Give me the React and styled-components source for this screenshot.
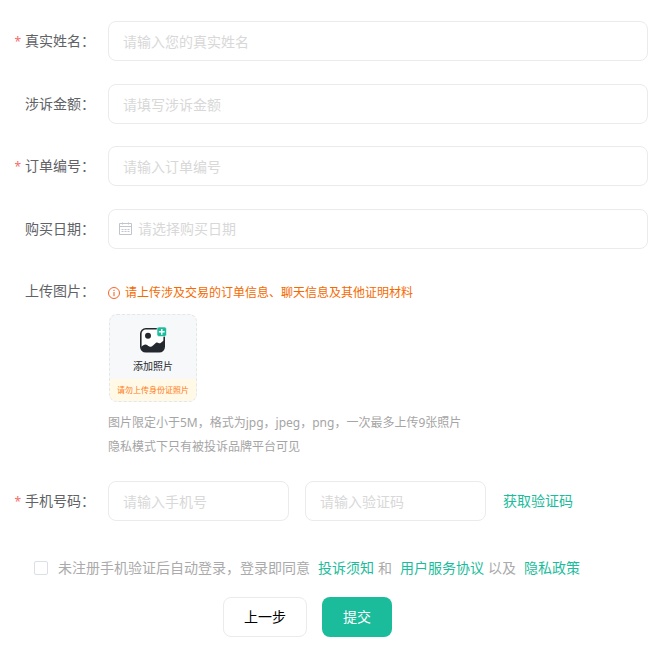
import React, { useState } from 'react';
import styled, { createGlobalStyle, css } from 'styled-components';

/* ================= ICONS ================= */

const CalendarIcon = () => (
  <svg width="14" height="14" viewBox="0 0 14 14" fill="none" stroke="#c0c4cc" aria-hidden="true">
    <path d="M0.5 1.5h12v11h-12zM0.5 4.5h12M3.5 0.5v2M9.5 0.5v2" />
    <path d="M2.5 7.5h2M5.5 7.5h2M8.5 7.5h2M2.5 9.5h2M5.5 9.5h2M8.5 9.5h2" />
  </svg>
);

const InfoIcon = () => (
  <svg width="12" height="12" viewBox="0 0 12 12" fill="none" stroke="#f5540a" aria-hidden="true">
    <circle cx="6" cy="6" r="5.5" strokeWidth="0.9" />
    <path d="M6 5v4.2M6 2.8v1.2" />
  </svg>
);

const PhotoIcon = () => (
  <svg width="28" height="28" viewBox="0 0 28 28" aria-hidden="true">
    <rect x="1.8" y="2.8" width="23.400" height="23" rx="5" fill="#fff" stroke="#24292f" strokeWidth="1.6" />
    <circle cx="9" cy="9.8" r="3" fill="#24292f" />
    <path
      d="M2 21C4.500 18.500 6.500 17.500 8.500 19.300C10.500 21 12 21.500 14 19.500L17 16.800C18 16 18.800 16.500 19.500 17C21 18 22 16.500 25 14.200V21C25 24 23.500 25.800 20.500 25.800H7C4 25.800 2 24 2 21Z"
      fill="#24292f"
    />
    <rect x="18" y="1" width="9.500" height="9.500" rx="2" fill="#1bbc9b" stroke="#f7f8fa" strokeWidth="0.6" />
    <path d="M22.750 2.900v5.800M19.850 5.800h5.800" stroke="#fff" strokeWidth="1.500" />
  </svg>
);

/* ================= COMPONENT ================= */

export default function App() {
  const [agreed, setAgreed] = useState(false);

  return (
    <>
      <GlobalStyle />
      <Form lang="zh-CN" onSubmit={(e) => e.preventDefault()}>
        <Fields>
          <Row>
            <Label htmlFor="name" $required>真实姓名：</Label>
            <Input id="name" placeholder="请输入您的真实姓名" />
          </Row>

          <Row>
            <Label htmlFor="amount">涉诉金额：</Label>
            <Input id="amount" placeholder="请填写涉诉金额" />
          </Row>

          <Row>
            <Label htmlFor="order" $required>订单编号：</Label>
            <Input id="order" placeholder="请输入订单编号" />
          </Row>

          <Row>
            <Label htmlFor="date">购买日期：</Label>
            <DateField>
              <CalendarIcon />
              <DateInput id="date" placeholder="请选择购买日期" />
            </DateField>
          </Row>

          <Row>
            <Label htmlFor="photos">上传图片：</Label>
            <Upload>
              <Notice>
                <InfoIcon />
                请上传涉及交易的订单信息、聊天信息及其他证明材料
              </Notice>
              <UploadButton id="photos" type="button">
                <UploadMain>
                  <PhotoIcon />
                  添加照片
                </UploadMain>
                <UploadWarning>请勿上传身份证照片</UploadWarning>
              </UploadButton>
              <Hint>图片限定小于5M，格式为jpg，jpeg，png，一次最多上传9张照片</Hint>
              <Hint>隐私模式下只有被投诉品牌平台可见</Hint>
            </Upload>
          </Row>

          <Row>
            <Label htmlFor="phone" $required>手机号码：</Label>
            <PhoneGroup>
              <ShortInput id="phone" type="tel" placeholder="请输入手机号" />
              <ShortInput aria-label="验证码" placeholder="请输入验证码" />
              <CodeButton type="button">获取验证码</CodeButton>
            </PhoneGroup>
          </Row>
        </Fields>

        <Agreement>
          <Checkbox
            id="agree"
            type="checkbox"
            checked={agreed}
            onChange={(e) => setAgreed(e.target.checked)}
          />
          <AgreeText htmlFor="agree">未注册手机验证后自动登录，登录即同意</AgreeText>
          <Link href="#notice">投诉须知</Link>
          <span>和</span>
          <Link href="#terms">用户服务协议</Link>
          <span>以及</span>
          <Link href="#privacy">隐私政策</Link>
        </Agreement>

        <Actions>
          <BackButton type="button">上一步</BackButton>
          <SubmitButton type="submit">提交</SubmitButton>
        </Actions>
      </Form>
    </>
  );
}

/* ================= STYLES ================= */

const GlobalStyle = createGlobalStyle`
  * {
    box-sizing: border-box;
  }

  body {
    margin: 0;
    background: #fff;
    color: #606266;
    font-family: 'Noto Sans', 'Noto Sans CJK SC', sans-serif;
    font-size: 14px;
  }

  input,
  button {
    font-family: inherit;
    font-size: 14px;
  }
`;

const Form = styled.form`
  padding: 21px 19px 20px 12px;
`;

const Fields = styled.div`
  display: flex;
  flex-direction: column;
  gap: 22px;
`;

const Row = styled.div`
  display: flex;
  align-items: flex-start;
  gap: 13px;
`;

const Label = styled.label`
  flex: none;
  width: 83px;
  line-height: 40px;
  text-align: right;
  white-space: nowrap;
  color: #606266;

  ${({ $required }) =>
    $required &&
    css`
      &::before {
        content: '*';
        margin-right: 4px;
        font-size: 12px;
        color: #f56c6c;
      }
    `}
`;

const fieldBase = css`
  height: 40px;
  border: 1px solid #ebebeb;
  border-radius: 8px;
  background: #fff;
`;

const Input = styled.input`
  ${fieldBase}
  flex: 1;
  min-width: 0;
  padding: 0 14px;
  color: #606266;
  outline: none;

  &::placeholder {
    color: #d8d8d8;
  }

  &:focus {
    border-color: #1bbc9b;
  }
`;

const ShortInput = styled(Input)`
  flex: 0 1 181px;
`;

const DateField = styled.div`
  ${fieldBase}
  flex: 1;
  min-width: 0;
  display: flex;
  align-items: center;
  gap: 5px;
  padding: 0 10px;
`;

const DateInput = styled(Input)`
  height: 38px;
  padding: 0 0 2px;
  border: none;
`;

const Upload = styled.div`
  flex: 1;
  min-width: 0;
`;

const Notice = styled.div`
  display: flex;
  align-items: center;
  gap: 5px;
  padding-top: 10px;
  line-height: 24px;
  font-size: 12px;
  color: #f56a00;
`;

const UploadButton = styled.button`
  display: flex;
  flex-direction: column;
  width: 88px;
  height: 88px;
  margin: 9px 0 9px 1px;
  padding: 0;
  overflow: hidden;
  border: 1px dashed #e4e6e8;
  border-radius: 8px;
  background: #f7f8fa;
  cursor: pointer;
`;

const UploadMain = styled.span`
  flex: 1;
  width: 100%;
  display: flex;
  flex-direction: column;
  align-items: center;
  padding-top: 11px;
  font-size: 10px;
  line-height: 24px;
  color: #24292f;
`;

const UploadWarning = styled.span`
  width: 100%;
  font-size: 8px;
  line-height: 22px;
  white-space: nowrap;
  text-align: center;
  color: #ff7a1a;
  background: #fff9e5;
`;

const Hint = styled.p`
  margin: 0;
  font-size: 12px;
  line-height: 24px;
  color: #a5a5a5;
`;

const PhoneGroup = styled.div`
  flex: 1;
  min-width: 0;
  display: flex;
  gap: 16px;
`;

const CodeButton = styled.button`
  flex: none;
  padding: 0 1px 2px;
  border: none;
  background: none;
  color: #1bbc9b;
  cursor: pointer;
`;

const Agreement = styled.div`
  display: flex;
  flex-wrap: wrap;
  align-items: center;
  margin-top: 34px;
  padding-left: 22px;
  line-height: 24px;
  color: #aaa;
`;

const Checkbox = styled.input`
  appearance: none;
  width: 14px;
  height: 14px;
  margin: 0;
  border: 1px solid #dcdfe6;
  border-radius: 2px;
  background: #fff;
  cursor: pointer;

  &:checked {
    border-color: #1bbc9b;
    background: #1bbc9b;
  }
`;

const AgreeText = styled.label`
  margin-left: 10px;
`;

const Link = styled.a`
  margin: 0 4px 0 8px;
  color: #1bbc9b;
  text-decoration: none;
`;

const Actions = styled.div`
  display: flex;
  justify-content: center;
  gap: 15px;
  margin-top: 17px;
  padding-right: 45px;
`;

const buttonBase = css`
  height: 40px;
  border-radius: 8px;
  cursor: pointer;
`;

const BackButton = styled.button`
  ${buttonBase}
  padding: 0 20px 2px;
  border: 1px solid #ebebeb;
  background: #fff;
  color: #000;
`;

const SubmitButton = styled.button`
  ${buttonBase}
  padding: 0 21px 2px;
  border: none;
  background: #1bbc9b;
  color: #fff;
`;
